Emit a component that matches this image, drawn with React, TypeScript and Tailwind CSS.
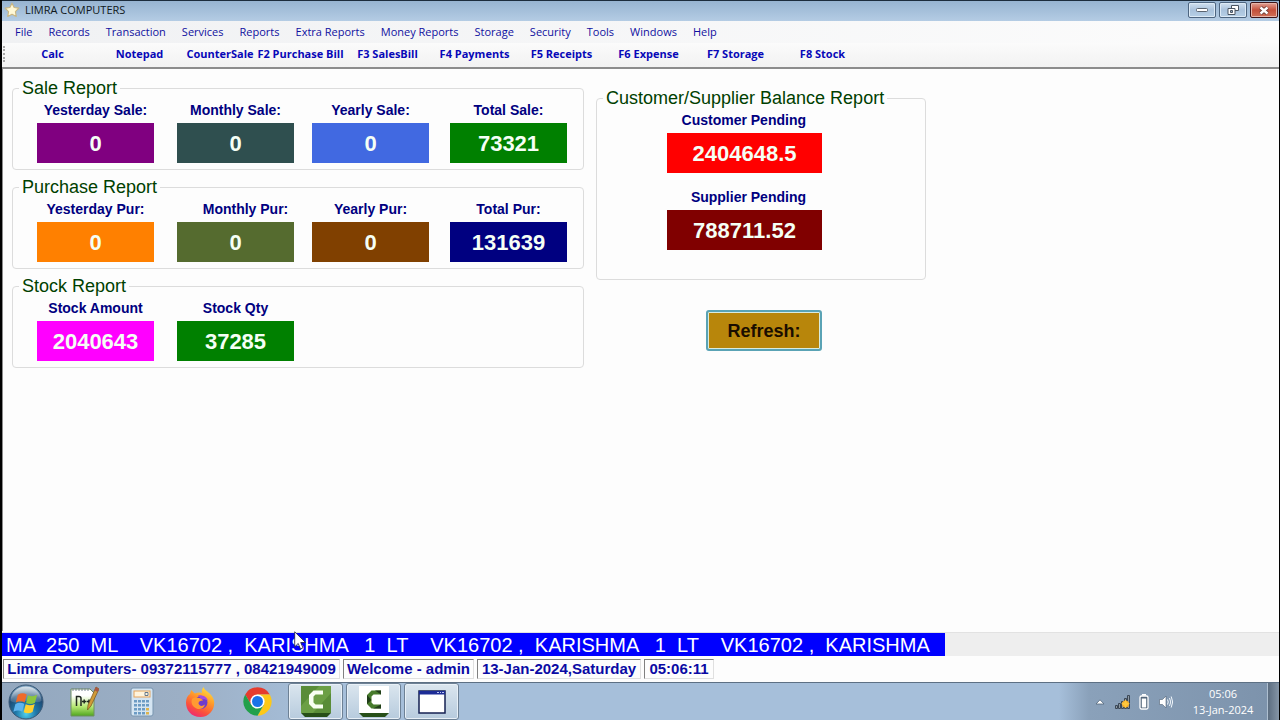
import type { ReactNode } from "react";

type Metric = { id: string; label: string; value: string; color: string; labelClass?: string };

const menus = [
  "File", "Records", "Transaction", "Services", "Reports", "Extra Reports",
  "Money Reports", "Storage", "Security", "Tools", "Windows", "Help",
];

const shortcuts = [
  { label: "Calc", width: "w-[87px]" },
  { label: "Notepad", width: "w-[87px]" },
  { label: "CounterSale", width: "w-[74px]" },
  { label: "F2 Purchase Bill", width: "w-[87px]" },
  { label: "F3 SalesBill", width: "w-[87px]" },
  { label: "F4 Payments", width: "w-[87px]" },
  { label: "F5 Receipts", width: "w-[87px]" },
  { label: "F6 Expense", width: "w-[87px]" },
  { label: "F7 Storage", width: "w-[87px]" },
  { label: "F8 Stock", width: "w-[87px]" },
];

const sale: Metric[] = [
  { id: "ys", label: "Yesterday Sale:", value: "0", color: "bg-[#800080]" },
  { id: "ms", label: "Monthly Sale:", value: "0", color: "bg-[#2f4f4f]" },
  { id: "yrs", label: "Yearly Sale:", value: "0", color: "bg-[#4169e1]" },
  { id: "ts", label: "Total Sale:", value: "73321", color: "bg-[#008000]" },
];

const purchase: Metric[] = [
  { id: "yp", label: "Yesterday Pur:", value: "0", color: "bg-[#ff8000]" },
  { id: "mp", label: "Monthly Pur:", value: "0", color: "bg-[#556b2f]", labelClass: "pl-5" },
  { id: "yrp", label: "Yearly Pur:", value: "0", color: "bg-[#804000]" },
  { id: "tp", label: "Total Pur:", value: "131639", color: "bg-[#000080]" },
];

const stock: Metric[] = [
  { id: "sa", label: "Stock Amount", value: "2040643", color: "bg-[#ff00ff]" },
  { id: "sq", label: "Stock Qty", value: "37285", color: "bg-[#008000]" },
];

const balances: Metric[] = [
  { id: "cp", label: "Customer Pending", value: "2404648.5", color: "bg-[#ff0000]", labelClass: "pr-4 text-right" },
  { id: "sp", label: "Supplier Pending", value: "788711.52", color: "bg-[#800000]", labelClass: "pr-4 text-right" },
];

const statuses = [
  { text: "Limra Computers- 09372115777 , 08421949009", width: "w-[337px]" },
  { text: "Welcome - admin", width: "w-[131px]" },
  { text: "13-Jan-2024,Saturday", width: "w-[164px]" },
  { text: "05:06:11", width: "w-[70px]" },
];

const ticker =
  "MA  250  ML    VK16702 ,  KARISHMA   1  LT    VK16702 ,  KARISHMA   1  LT    VK16702 ,  KARISHMA";

function Tile({ metric }: { metric: Metric }) {
  return (
    <div className="flex flex-col">
      <label
        htmlFor={metric.id}
        className={`h-[25px] whitespace-nowrap text-center text-sm leading-[25px] font-bold text-[#000080] ${metric.labelClass ?? ""}`}
      >
        {metric.label}
      </label>
      <output
        id={metric.id}
        className={`flex h-10 items-center justify-center text-[22px] font-bold text-[#f5fff5] ${metric.color}`}
      >
        {metric.value}
      </output>
    </div>
  );
}

function Group({ title, className, children }: { title: string; className?: string; children: ReactNode }) {
  return (
    <fieldset className={`rounded-[4px] border border-[#dcdcdc] pl-6 ${className ?? ""}`}>
      <legend className="-ml-[18px] h-5 px-[3px] text-lg leading-5 text-[#004000]">{title}</legend>
      {children}
    </fieldset>
  );
}

function MetricRow({ items }: { items: Metric[] }) {
  return (
    <div className="grid grid-cols-[140px_135px_138px_117px] pb-1.5">
      {items.map((m) => (
        <div key={m.id} className="w-[117px]"><Tile metric={m} /></div>
      ))}
    </div>
  );
}

function StartOrb() {
  return (
    <svg viewBox="0 0 36 36" className="size-9">
      <defs>
        <radialGradient id="orb" cx="50%" cy="85%" r="85%">
          <stop offset="0" stopColor="#4fd0ee" />
          <stop offset=".35" stopColor="#1f78a8" />
          <stop offset=".7" stopColor="#1d4a74" />
          <stop offset="1" stopColor="#7fa6c4" />
        </radialGradient>
        <linearGradient id="gloss" x1="0" y1="0" x2="0" y2="1">
          <stop offset="0" stopColor="#fff" stopOpacity=".75" />
          <stop offset="1" stopColor="#fff" stopOpacity=".12" />
        </linearGradient>
      </defs>
      <circle cx="18" cy="18" r="17" fill="url(#orb)" stroke="#395775" />
      <path d="M2.500 17C3 8 9.500 2.500 18 2.500S33 8 33.500 17c-5 3-10-1-15.500 0s-10 3-15.500 0z" fill="url(#gloss)" />
      <g transform="translate(-3.500 -3.800) scale(1.270)">
        <path d="M10.500 11.500c2.500-1.500 4.700-1.500 7-.2l-1.600 6.200c-2.300-1.200-4.500-1.200-7 .1z" fill="#f06a2a" />
        <path d="M18.500 11.800c2.500 1.200 4.800 1 7.200-.3l-1.700 6.300c-2.300 1.200-4.700 1.300-7 .1z" fill="#8cc63f" />
        <path d="M8.600 18.700c2.500-1.400 4.700-1.300 7-.1L14 24.800c-2.300-1.200-4.500-1.200-7 .1z" fill="#5fb4ee" />
        <path d="M16.700 19c2.400 1.200 4.700 1 7.100-.2l-1.700 6.300c-2.300 1.200-4.600 1.300-7 .1z" fill="#ffd02f" />
      </g>
    </svg>
  );
}

function NotepadIcon() {
  return (
    <svg viewBox="0 0 30 32" className="h-8 w-[30px]">
      <defs>
        <linearGradient id="npp" x1="0" y1="0" x2="0" y2="1">
          <stop offset=".25" stopColor="#fff" />
          <stop offset=".65" stopColor="#b6e873" />
          <stop offset="1" stopColor="#4fa51e" />
        </linearGradient>
      </defs>
      <path d="M2 3h19l4 4v23H2z" fill="url(#npp)" stroke="#6f8f62" />
      <path d="M4 2v3M7 2v3M10 2v3M13 2v3M16 2v3M19 2v3" stroke="#7a8793" />
      <path d="M7.500 20v-9.500h2.500q2 0 2 2V20M13 15.500h4.500M15.200 13.500v4M18 15.500h4M20 13.500v4" fill="none" stroke="#202820" strokeWidth="1.500" />
      <path d="M27 1l3 2-8 17-3.500 4 .5-5z" fill="#d09a38" stroke="#75511c" strokeWidth=".7" />
      <path d="M27 1l3 2-1.500 3-3-1.700z" fill="#a95543" />
    </svg>
  );
}

function CalcIcon() {
  return (
    <svg viewBox="0 0 24 30" className="h-[30px] w-6">
      <rect x="1" y="1" width="22" height="28" rx="2" fill="#d5e5f2" stroke="#7895b0" />
      <rect x="4" y="4" width="16" height="6" fill="#fff4dd" stroke="#e5a45c" />
      <path d="M15 5.500h3v3h-3z" fill="none" stroke="#66788b" />
      {[13, 17, 21, 25].map((y) => (
        <g key={y}>
          {[4, 8, 12, 16].map((x) => (
            <rect key={x} x={x} y={y} width="3" height="2.500" fill={x === 16 && y > 17 ? "#ddb34e" : "#6c9bc4"} />
          ))}
        </g>
      ))}
    </svg>
  );
}

function FirefoxIcon() {
  return (
    <svg viewBox="0 0 30 30" className="size-[30px]">
      <defs>
        <linearGradient id="fox" x1=".8" y1="0" x2=".3" y2="1">
          <stop offset="0" stopColor="#ffe642" />
          <stop offset=".4" stopColor="#ff9a2b" />
          <stop offset=".75" stopColor="#fb503c" />
          <stop offset="1" stopColor="#ed2874" />
        </linearGradient>
      </defs>
      <path d="M5 7l1.200-4 3.600 3.600C12 5.500 14.500 5.200 17 6c-.7-2.300.2-4.400 1.700-6 0 3.500 8 5.700 10 12.500C31 21 25 30 15.500 30S1 23 1 15.500C1 12 2.300 8.800 5 7z" fill="url(#fox)" />
      <circle cx="16" cy="15.500" r="6.500" fill="#713ccb" />
      <path d="M7 12c3-3 7-1 9.500-.5l1.500 2c-3 .2-4.500 1-4.500 3 1 3 4 3 6.500 1-1 4-5 5.500-8.500 4s-6-5-4.500-9.500z" fill="#ff9b32" />
      <path d="M13 8.500c4-1 9 1.200 10 5.500-2-1.700-4-2-6-1.500z" fill="#a34ce0" />
    </svg>
  );
}

function ChromeIcon() {
  return (
    <svg viewBox="0 0 48 48" className="size-[31px]">
      <path d="M24 2A22 22 0 0 1 43.050 13H24L14.500 29.500 4.950 13A22 22 0 0 1 24 2z" fill="#e53c2e" />
      <path d="M43.050 13A22 22 0 0 1 24 46l9.500-16.500L24 13z" fill="#fdc817" />
      <path d="M24 46A22 22 0 0 1 4.950 13l9.550 16.500L33.500 29.500z" fill="#22a04b" />
      <circle cx="24" cy="24" r="11" fill="#fff" />
      <circle cx="24" cy="24" r="8.500" fill="#1a73e8" />
    </svg>
  );
}

function CamtasiaIcon({ solid }: { solid?: boolean }) {
  return (
    <svg viewBox="0 0 30 31" className="h-[31px] w-[30px]">
      <rect width="30" height="27" fill={solid ? "#6b9f45" : "#ffffff"} />
      {solid && <path d="M0 0h18L0 20zM30 7v20H12z" fill="#4d8130" opacity=".6" />}
      <path
        d="M22 4.500h-9.500L8 9v9l4.500 4.500H22V18.500h-7.500L12.500 16.500v-6L14.500 8.500H22z"
        fill={solid ? "#f8fff2" : "#477b2c"}
      />
      {!solid && <path d="M22 4.500h-6l6 4zM8 9v9l4.500-4zM14 22.500h8v-4z" fill="#203d19" />}
      <path d="M0 27h30l-4 4H4z" fill="#274f18" />
    </svg>
  );
}

function WindowIcon() {
  return (
    <svg viewBox="0 0 28 24" className="h-6 w-7">
      <rect x="1" y="1" width="26" height="22" fill="#fff" stroke="#152052" strokeWidth="1.500" />
      <path d="M1 1h26v3.500H1z" fill="#1c2c96" />
      <path d="M19 2.500h2M22 2.500h1M24 2.500h2" stroke="#b9c5f0" />
    </svg>
  );
}

const tasks = [
  { name: "Notepad++", icon: <NotepadIcon />, open: false },
  { name: "Calculator", icon: <CalcIcon />, open: false },
  { name: "Firefox", icon: <FirefoxIcon />, open: false },
  { name: "Chrome", icon: <ChromeIcon />, open: false },
  { name: "Camtasia", icon: <CamtasiaIcon solid />, open: true },
  { name: "Camtasia Recorder", icon: <CamtasiaIcon />, open: true },
  { name: "Limra Computers", icon: <WindowIcon />, open: true },
];

function TitleBar() {
  const box = "flex h-4 w-7 items-center justify-center rounded-[2px] border border-[#4d6580] bg-linear-to-b from-[#d2e1f0] via-[#a9c2dc] to-[#b7d0e6] shadow-[inset_0_0_0_1px_#dceaf6]";
  return (
    <header className="flex h-[21px] items-start border-t border-[#1c2c3c] bg-linear-to-b from-[#97b4d1] to-[#b4cce4] pt-px pl-0.5">
      <svg viewBox="0 0 14 14" className="size-4">
        <path d="M7 1l1.900 3.800 4.100.6-3 3 .7 4.200L7 10.700l-3.700 1.900.7-4.200-3-3 4.100-.6z" fill="#fff8d6" stroke="#c9b681" strokeLinejoin="round" />
      </svg>
      <h1 className="ml-[5px] font-['Open_Sans',sans-serif] text-[11px] leading-4 text-[#101820]">LIMRA COMPUTERS</h1>
      <div className="ml-auto flex gap-[3px] pr-px">
        <button aria-label="Minimize" className={box}>
          <svg viewBox="0 0 12 6" className="h-1.5 w-3"><rect x=".5" y="1.500" width="11" height="3" rx="1" fill="#fff" stroke="#5a6470" /></svg>
        </button>
        <button aria-label="Restore" className={box}>
          <svg viewBox="0 0 12 10" className="h-2.5 w-3">
            <path d="M4.500.5h7v5h-7z" fill="#fff" stroke="#4a5562" />
            <path d="M1 3.500h7v6H1z" fill="#fff" stroke="#4a5562" />
            <path d="M3.500 5.500h2v2h-2z" fill="#90a8c0" stroke="#4a5562" />
          </svg>
        </button>
        <button aria-label="Close" className="flex h-4 w-7 items-center justify-center rounded-[2px] border border-[#3f1418] bg-linear-to-b from-[#e0a095] via-[#c44f3a] to-[#cf7058] shadow-[inset_0_0_0_1px_#e7b4a8]">
          <svg viewBox="0 0 12 9" className="h-[9px] w-3">
            <path d="M2.500 1.500l7 6M9.500 1.500l-7 6" stroke="#59302c" strokeWidth="4" />
            <path d="M2.500 1.500l7 6M9.500 1.500l-7 6" stroke="#fff" strokeWidth="2.400" />
          </svg>
        </button>
      </div>
    </header>
  );
}

function Taskbar() {
  return (
    <footer className="flex h-[38px] items-stretch border-t border-[#5d7084] bg-[linear-gradient(90deg,#93a8bf_0px,#9cafc5_180px,#a6bfda_320px,#a6bfda_calc(100%-220px),#8aa1ba_calc(100%-190px),#7c92ab_100%)]">
      <button aria-label="Start" className="flex w-12 items-center justify-center"><StartOrb /></button>
      <div className="ml-1.5 flex gap-[3px]">
        {tasks.map((t) => (
          <button
            key={t.name}
            aria-label={t.name}
            className={
              t.open
                ? "flex w-[55px] items-center justify-center rounded-[3px] border border-[#6d8195] bg-linear-to-b from-[#dbe6ef] to-[#b7cbdd] shadow-[inset_0_0_0_1px_#e8f0f7]"
                : "flex w-[55px] items-center justify-center"
            }
          >
            {t.icon}
          </button>
        ))}
      </div>
      <div className="ml-auto flex items-center">
        <svg viewBox="0 0 10 6" className="mr-2.5 h-1.5 w-2.5"><path d="M5 .8L9 5H1z" fill="#fff" stroke="#53677c" strokeWidth=".8" /></svg>
        <svg viewBox="0 0 16 14" className="mr-2 h-3.5 w-4">
          <path d="M.5 10.500h2v3h-2zM3.500 8.500h2v5h-2zM6.500 6.500h2v7h-2zM9.500 3.500h2v10h-2zM12.500.5h2v13h-2z" fill="#8c98a2" stroke="#3c4856" />
          <circle cx="10.500" cy="9" r="3.500" fill="#f9ae25" />
          <path d="M10.500 4.500l1.300 3 3.200 1.300-3.100 1.400-1.400 3-1.400-3-3.100-1.400 3.200-1.300z" fill="#ffc83f" />
        </svg>
        <svg viewBox="0 0 10 16" className="mr-2.5 h-4 w-2.5">
          <rect x="1" y="2" width="8" height="13" rx="1.500" fill="#53667b" stroke="#fff" strokeWidth="1.300" />
          <path d="M3 .8h4" stroke="#fff" strokeWidth="1.600" />
          <path d="M2.800 4.500h4.400v9H2.800z" fill="#fff" />
        </svg>
        <svg viewBox="0 0 14 14" className="h-3.5 w-3.5">
          <path d="M.5 4.500h3L7 1v12L3.500 9.500h-3z" fill="#fff" stroke="#506276" strokeWidth=".6" />
          <path d="M8.500 4.500q1.500 2.500 0 5M10.500 3q2.500 4 0 8M12.200 1.500q3 5.500 0 11" fill="none" stroke="#f3f8fd" />
        </svg>
        <time className="w-[98px] pl-0.5 text-center font-['Open_Sans',sans-serif] text-[11px] leading-4 text-white">
          05:06<br />13-Jan-2024
        </time>
      </div>
      <button aria-label="Show desktop" className="ml-[-4px] w-3 border-l border-[#aebfd0] bg-linear-to-r from-[#5c6d80] to-[#8595a6]" />
    </footer>
  );
}

export default function App() {
  return (
    <div className="flex min-h-screen flex-col border-r border-l-2 border-black bg-[#fdfdfd] font-['Liberation_Sans',Arial,sans-serif]">
      <TitleBar />
      <nav className="flex h-[22px] items-center gap-4 bg-linear-to-r from-[#f0f1f3] to-[#fcfcfc] pl-[13px] font-['Open_Sans',sans-serif] text-[11px] text-[#1010a0]">
        {menus.map((m) => <button key={m} className="whitespace-nowrap">{m}</button>)}
      </nav>
      <div role="toolbar" className="flex h-6 items-center bg-linear-to-b from-[#fbfbfb] to-[#f2f2f2] pb-0.5 pl-px font-['Open_Sans',sans-serif] text-[11px] font-bold text-[#0808b8]">
        <span className="mr-1 h-4 w-px border-l-2 border-dotted border-[#a8a8a8]" />
        {shortcuts.map((s) => (
          <button key={s.label} className={`flex justify-center whitespace-nowrap ${s.width}`}>{s.label}</button>
        ))}
      </div>
      <main className="flex flex-1 items-start gap-3 border-t-2 border-l border-[#8c8c8c] pt-[9px] pl-[9px]">
        <div className="flex w-[572px] flex-col gap-[7px]">
          <Group title="Sale Report"><MetricRow items={sale} /></Group>
          <Group title="Purchase Report"><MetricRow items={purchase} /></Group>
          <Group title="Stock Report"><MetricRow items={stock} /></Group>
        </div>
        <div className="flex w-[330px] flex-col pt-2.5">
          <Group title="Customer/Supplier Balance Report">
            <div className="ml-[46px] flex w-[155px] flex-col gap-3 pb-[29px]">
              {balances.map((m) => <Tile key={m.id} metric={m} />)}
            </div>
          </Group>
          <button className="mt-[30px] mr-[104px] h-[41px] w-[116px] self-end rounded-[3px] border-2 border-[#5aa3b5] bg-[#b8860b] text-lg font-bold text-[#1a0d00] shadow-[inset_0_0_0_1px_#d8ecdf]">
            Refresh:
          </button>
        </div>
      </main>
      <div className="relative mt-px flex h-6 border-t border-[#e2e2e2] bg-[#eeeeee]">
        <p className="flex w-[943px] items-center overflow-hidden bg-[#0000ff] pl-1 text-xl leading-6 whitespace-pre text-white">{ticker}</p>
        <svg viewBox="0 0 12 19" className="absolute -top-0.5 left-[292px] h-[19px] w-3">
          <path d="M.7.8v15l3.500-3.300 2.300 5.400 2.500-1.100L6.700 11.500h4.800z" fill="#fff" stroke="#1b1b3c" strokeWidth=".8" />
        </svg>
      </div>
      <div className="flex h-[26px] items-center gap-[3px] pl-px">
        {statuses.map((s) => (
          <span
            key={s.text}
            className={`flex h-5 items-center justify-center border border-t-[#808080] border-r-[#e0e0e0] border-b-[#e0e0e0] border-l-[#808080] text-[15px] font-bold whitespace-nowrap text-[#0a0aa4] ${s.width}`}
          >
            {s.text}
          </span>
        ))}
      </div>
      <Taskbar />
    </div>
  );
}
